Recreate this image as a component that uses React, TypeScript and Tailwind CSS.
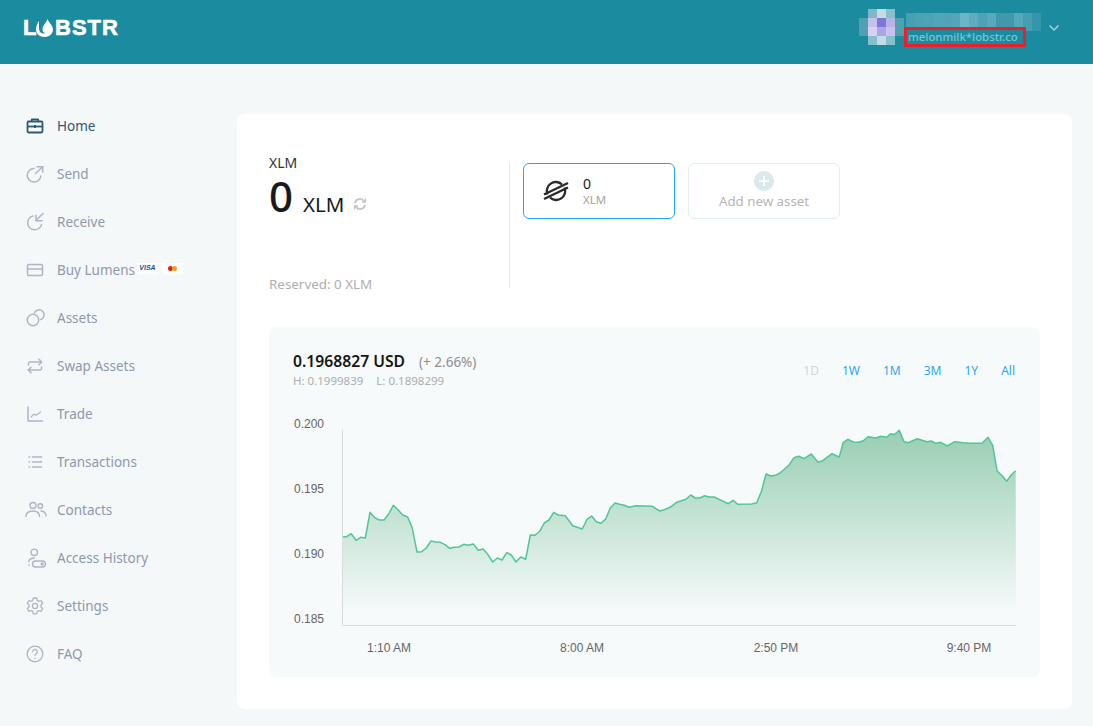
import type { ReactNode } from "react";

const font = "font-['Noto_Sans',sans-serif]";

// traced from the reference, [x, y] in page pixels
const zoomA = [37,350,50,350,64,341,78,361,92,352,106,354,120,277,134,293,148,300,162,300,176,282,190,256,204,269,218,285,233,291,247,325,261,396,275,395,289,384,303,363,317,366,331,367,345,374,359,385,373,382,387,381,401,373,415,376,430,372,445,391,459,387,473,403,488,426,502,414,516,420,530,398,544,405,558,426,572,411,587,418,601,345,615,346,629,334,643,309,657,300,671,277,685,285,706,287,728,317,757,327,771,298,785,288,799,305,813,310,827,297,841,264,855,249,869,253,883,256,897,262,918,257,967,259,989,273,1003,269];
const zoomB = [0,262,20,247,48,238,62,225,76,234,90,234,104,227,118,231,133,231,147,238,175,251,189,241,203,253,245,252,260,248,274,215,288,162,302,168,316,166,330,159,358,134,372,113,386,109,402,116,424,102,444,127,458,122,486,101,508,111,520,67,534,58,550,66,565,67,580,62,594,50,618,54,632,49,650,52,660,42,674,43,688,31,702,65,714,68,742,56,770,65,784,63,798,70,812,67,832,78,854,65,880,68,900,70,936,70,954,52,968,76,981,152,996,167,1010,184,1024,165,1037,152];

const toPoints = (arr: number[], ox: number) => {
  const out: string[] = [];
  for (let i = 0; i < arr.length; i += 2) {
    out.push(`${(ox + arr[i] / 3).toFixed(1)},${(420 + arr[i + 1] / 3).toFixed(1)}`);
  }
  return out;
};
const linePoints = [...toPoints(zoomA, 330), ...toPoints(zoomB, 670)].join(" ");
const areaPoints = `342,625 ${linePoints} 1016,625`;

const Ico = ({ children }: { children: ReactNode }) => (
  <svg width="20" height="20" viewBox="0 0 20 20" fill="none" stroke="#aeb5c7" strokeWidth="1.5" strokeLinecap="round" strokeLinejoin="round">
    {children}
  </svg>
);

const navItems: { label: string; icon: ReactNode; active?: boolean; cards?: boolean }[] = [
  {
    label: "Home",
    active: true,
    icon: (
      <svg width="20" height="20" viewBox="0 0 20 20" fill="none" stroke="#2f5874" strokeWidth="1.8" strokeLinejoin="round">
        <rect x="2.5" y="5.5" width="15" height="11" rx="1.2" />
        <path d="M6.8 5.5V3.4h6.4v2.1" />
        <path d="M2.5 10.5h15" />
        <path d="M9 10.5h2" strokeWidth="3" />
      </svg>
    ),
  },
  {
    label: "Send",
    icon: (
      <Ico>
        <path d="M9 4.500a6.800 6.800 0 1 0 6.800 7.500" />
        <path d="M10.500 9.500 17.700 2.700" />
        <path d="M12 2.700h5.700v5.300" />
      </Ico>
    ),
  },
  {
    label: "Receive",
    icon: (
      <Ico>
        <path d="M8 4a7 7 0 1 0 8.500 8.500" />
        <path d="M18 1.500 11 8.500" />
        <path d="M11 3.200v5.500h6" />
      </Ico>
    ),
  },
  {
    label: "Buy Lumens",
    cards: true,
    icon: (
      <Ico>
        <rect x="2.5" y="4.5" width="15" height="11" rx="1.5" />
        <path d="M2.5 9h15" />
      </Ico>
    ),
  },
  {
    label: "Assets",
    icon: (
      <Ico>
        <circle cx="8" cy="12" r="5.7" />
        <path d="M9.5 4.8a5 5 0 1 1 6.2 6.8" />
      </Ico>
    ),
  },
  {
    label: "Swap Assets",
    icon: (
      <Ico>
        <path d="M3.500 9V7.500a1.500 1.500 0 0 1 1.500-1.500h11.500" />
        <path d="M14 3.300 16.700 6 14 8.700" />
        <path d="M16.500 11v1.500a1.500 1.500 0 0 1-1.500 1.500H3.500" />
        <path d="M6 11.300 3.300 14 6 16.700" />
      </Ico>
    ),
  },
  {
    label: "Trade",
    icon: (
      <Ico>
        <path d="M3 3v14h14.500" />
        <path d="m6 13 3-3 2.200 1.300L15.500 8" strokeWidth="1.200" />
      </Ico>
    ),
  },
  {
    label: "Transactions",
    icon: (
      <Ico>
        <path d="M7.500 5h9M7.500 10h9M7.500 15h9" />
        <path d="M4 5h.6M4 10h.6M4 15h.6" />
      </Ico>
    ),
  },
  {
    label: "Contacts",
    icon: (
      <svg width="22" height="20" viewBox="0 0 22 20" fill="none" stroke="#aeb5c7" strokeWidth="1.4" strokeLinecap="round">
        <circle cx="8" cy="5.5" r="3" />
        <circle cx="15.3" cy="6" r="2.3" />
        <path d="M1 16.5c0-3.6 2.8-5.5 7-5.5s6.5 1.9 6.5 5.5" />
        <path d="M16 11c2.8.3 5 1.900 5 5" />
      </svg>
    ),
  },
  {
    label: "Access History",
    icon: (
      <svg width="22" height="20" viewBox="0 0 22 20" fill="none" stroke="#aeb5c7" strokeWidth="1.4" strokeLinecap="round">
        <circle cx="9.300" cy="4.300" r="3.200" />
        <path d="M3.700 13.500C4.200 11.300 6.300 10 9.500 10" />
        <path d="M4 17v.4" />
        <rect x="7.500" y="13" width="13" height="6" rx="3" />
        <circle cx="17.200" cy="16" r="1" />
      </svg>
    ),
  },
  {
    label: "Settings",
    icon: (
      <Ico>
        <path d="M8.300 2h3.400l.5 2.400 1.500.9 2.300-.8 1.700 2.900-1.800 1.600v1.800l1.800 1.600-1.700 2.900-2.300-.8-1.500.9-.5 2.400H8.300l-.5-2.400-1.500-.9-2.300.8-1.700-2.900L4.100 10.800V9L2.300 7.400 4 4.500l2.300.8 1.500-.9z" strokeWidth="1.300" />
        <circle cx="10" cy="10" r="2.600" strokeWidth="1.300" />
      </Ico>
    ),
  },
  {
    label: "FAQ",
    icon: (
      <Ico>
        <circle cx="10" cy="10" r="7.800" strokeWidth="1.300" />
        <path d="M7.700 7.800a2.300 2.300 0 1 1 3.400 2c-.8.500-1.100 1-1.100 1.800" strokeWidth="1.300" />
        <path d="M10 14.300v.1" strokeWidth="1.500" />
      </Ico>
    ),
  },
];

const avatarRows = [
  ["", "#7fb9c6", "#c2dde6", "#87bfcb", ""],
  ["#4fa1b2", "#c7c0ea", "#7d78d8", "#b9b2e6", "#4fa1b2"],
  ["#4fa1b2", "#d9d1f1", "#aaa5e6", "#c8c2ec", "#4fa1b2"],
  ["", "#85c0cc", "#c2dde6", "#85c0cc", ""],
];

const nameMosaic = [
  "#45a0b3", "#4aa3b5", "#4ca3b5", "#50a6b8", "#4fa5b7", "#52a6b8", "#6db5c5", "#60acbd", "#4da3b5", "#58a9bb", "#4098ac", "#4098ac", "#55a8ba", "#459eb1", "#3595aa",
];

const LobstrLogo = () => (
  <div className="mb-2 flex items-center text-white font-['Liberation_Sans',sans-serif] font-bold text-[22px] leading-none tracking-[1px] [-webkit-text-stroke:0.6px_white]">
    <span className="w-[13px]">L</span>
    <svg width="17" height="18" viewBox="0 0 17 18" className="mr-[2px] mt-[-1px]">
      <path d="M3 2C1 4.500 0 8 0 10.500 0 15 3.800 18 8.500 18S17 15 17 10.500C17 6.500 13 4 11.500 0 10.500 3.500 7 6 6.500 10 6.300 12 7.500 13.800 9 14L8 14.500C5.200 14.500 3 12.500 3 9.500 3 7 3 4.500 3 2Z" fill="white" />
    </svg>
    <span>BSTR</span>
  </div>
);

export default function App() {
  return (
    <div className={`${font} min-h-screen bg-[#f4f8f9] flex flex-col`}>
      {/* top bar */}
      <header className="h-16 bg-[#1b8ba0] flex items-center justify-between pl-[23px] pr-[33px]">
        <LobstrLogo />
        <div className="flex items-center">
          <div className="grid grid-cols-[repeat(5,9px)] auto-rows-[9px] mb-[10px]">
            {avatarRows.flat().map((c, i) => (
              <div key={i} className="h-[9px] w-[9px]" style={{ backgroundColor: c || "transparent" }} />
            ))}
          </div>
          <div className="flex flex-col w-[137px] mb-[4px]">
            <div className="flex h-[18px] ml-[2px]">
              {nameMosaic.map((c, i) => (
                <div key={i} className="w-[9px] h-full" style={{ backgroundColor: c }} />
              ))}
            </div>
            <div className="relative mt-[-4px] w-[122px] h-[20px] bg-[#1b8ba0] border-[3px] border-[#e8202e] rounded-[1px] flex items-center pl-[1px] text-[11.4px] font-medium leading-none text-[#7cc3d0] whitespace-nowrap">
              melonmilk*lobstr.co
            </div>
          </div>
          <svg width="12" height="8" viewBox="0 0 12 8" fill="none" stroke="#9fd0da" strokeWidth="1.500" className="ml-[7px] mb-[8px]">
            <path d="M1.500 1.500 6 6l4.500-4.500" />
          </svg>
        </div>
      </header>

      <div className="flex flex-1">
        {/* sidebar */}
        <nav className="w-[237px] shrink-0 pt-[38px] pl-[25px] flex flex-col">
          {navItems.map((item) => (
            <div key={item.label} className="h-12 flex items-center">
              <div className="w-[32px] flex">{item.icon}</div>
              <span className={`text-[13.5px] whitespace-nowrap ${item.active ? "text-[#33566f]" : "text-[#8f99ae]"}`}>{item.label}</span>
              {item.cards && (
                <div className="flex gap-[4px] ml-[2px] mb-[3px]">
                  <div className="w-[21px] h-[11px] bg-white flex items-center justify-center font-['Liberation_Sans',sans-serif] italic font-bold text-[7px] text-[#1a4f96]">VISA</div>
                  <div className="w-[21px] h-[11px] bg-white flex items-center justify-center">
                    <span className="w-[5px] h-[5px] rounded-full bg-[#e2231a]" />
                    <span className="w-[5px] h-[5px] rounded-full bg-[#f79e1b] ml-[-1px]" />
                  </div>
                </div>
              )}
            </div>
          ))}
        </nav>

        {/* main */}
        <main className="flex-1 pt-[50px] pr-[21px] pb-[17px]">
          <div className="bg-white rounded-lg p-8">
            <section className="flex h-[181px] pt-[17px]">
              <div className="w-[241px] flex flex-col h-[125px] border-r border-[#dcebef]">
                <div className="text-[14px] leading-[14px] text-[#333] mt-[-7px]">XLM</div>
                <div className="flex items-baseline leading-none text-[#1a1a1a] mt-[4px]">
                  <span className="text-[42px] leading-[44px] font-medium">0</span>
                  <span className="text-[20.5px] ml-[10px]">XLM</span>
                  <svg width="14" height="14" viewBox="0 0 14 14" fill="none" stroke="#c4c4c4" strokeWidth="1.800" className="ml-[9px] self-center mt-[15px]">
                    <path d="M2 6a5 5 0 0 1 9-2l1 1" />
                    <path d="M12 8a5 5 0 0 1-9 2l-1-1" />
                    <path d="M12.500 1.500v3.500H9M1.500 12.500V9H5" strokeWidth="1.300" />
                  </svg>
                </div>
                <div className="mt-auto text-[13.400px] leading-none text-[#aeaeae] mb-[-3px]">Reserved: 0 XLM</div>
              </div>
              <div className="flex gap-[13px] pl-[13px]">
                <div className="w-[152px] h-[56px] border border-[#1fa8fb] rounded-md flex items-center pl-[19px]">
                  <svg width="26" height="26" viewBox="0 0 26 26" fill="none" stroke="#2b2b2b" className="shrink-0">
                    <path d="M4.500 16.500A9 9 0 0 1 19 6.500" strokeWidth="2.400" />
                    <path d="M21.500 9.500A9 9 0 0 1 7 19.500" strokeWidth="2.400" />
                    <path d="M1 16.500 25 5M1 21 25 9.500" strokeWidth="2.400" />
                  </svg>
                  <div className="ml-[14px] flex flex-col">
                    <span className="text-[14px] leading-[18px] text-[#1a1a1a]">0</span>
                    <span className="text-[11.500px] leading-[14px] text-[#a3a3a3]">XLM</span>
                  </div>
                </div>
                <div className="w-[152px] h-[56px] border border-[#e2eff1] rounded-md flex flex-col items-center pt-[7px]">
                  <div className="w-5 h-5 rounded-full bg-[#d8eaec] flex items-center justify-center">
                    <svg width="12" height="12" viewBox="0 0 12 12" stroke="white" strokeWidth="2"><path d="M6 1v10M1 6h10" /></svg>
                  </div>
                  <span className="text-[13.300px] leading-[18px] text-[#b5b5b5] mt-[1px]">Add new asset</span>
                </div>
              </div>
            </section>

            <section className="bg-[#f6fafb] rounded-lg h-[350px] flex flex-col">
              <div className="h-[73px] shrink-0 flex justify-between pl-6 pr-6 pt-[24px]">
                <div>
                  <div className="flex items-baseline leading-[20px]">
                    <span className="text-[15.700px] font-semibold text-[#161616]">0.1968827 USD</span>
                    <span className="text-[13.500px] text-[#8f8f8f] ml-[14px]">(+ 2.66%)</span>
                  </div>
                  <div className="flex gap-[13px] text-[11.500px] leading-[14px] text-[#adadad] mt-[2px]">
                    <span>H: 0.1999839</span>
                    <span>L: 0.1898299</span>
                  </div>
                </div>
                <div className="flex gap-[23px] mr-[1px] mt-[10px] text-[12px] leading-[20px] text-[#2aa7f5]">
                  <span className="text-[#d2d6d9]">1D</span>
                  <span>1W</span>
                  <span>1M</span>
                  <span>3M</span>
                  <span>1Y</span>
                  <span>All</span>
                </div>
              </div>
              <svg viewBox="269 400 771 277" width="771" height="277" className="block">
                <defs>
                  <linearGradient id="area" gradientUnits="userSpaceOnUse" x1="0" y1="430" x2="0" y2="612">
                    <stop offset="0" stopColor="#98ceb2" />
                    <stop offset="1" stopColor="#98ceb2" stopOpacity="0" />
                  </linearGradient>
                </defs>
                <polygon points={areaPoints} fill="url(#area)" />
                <polyline points={linePoints} fill="none" stroke="#4fc796" strokeWidth="1.500" strokeLinejoin="round" />
                <path d="M342.500 430v195.500H1016" fill="none" stroke="#d8dcdf" strokeWidth="1" />
                <g fontFamily="'Liberation Sans',sans-serif" fontSize="12" fill="#666">
                  <text x="294" y="428">0.200</text>
                  <text x="294" y="493">0.195</text>
                  <text x="294" y="558">0.190</text>
                  <text x="294" y="623">0.185</text>
                  <text x="389" y="652" textAnchor="middle">1:10 AM</text>
                  <text x="582" y="652" textAnchor="middle">8:00 AM</text>
                  <text x="776" y="652" textAnchor="middle">2:50 PM</text>
                  <text x="969" y="652" textAnchor="middle">9:40 PM</text>
                </g>
              </svg>
            </section>
          </div>
        </main>
      </div>
    </div>
  );
}
